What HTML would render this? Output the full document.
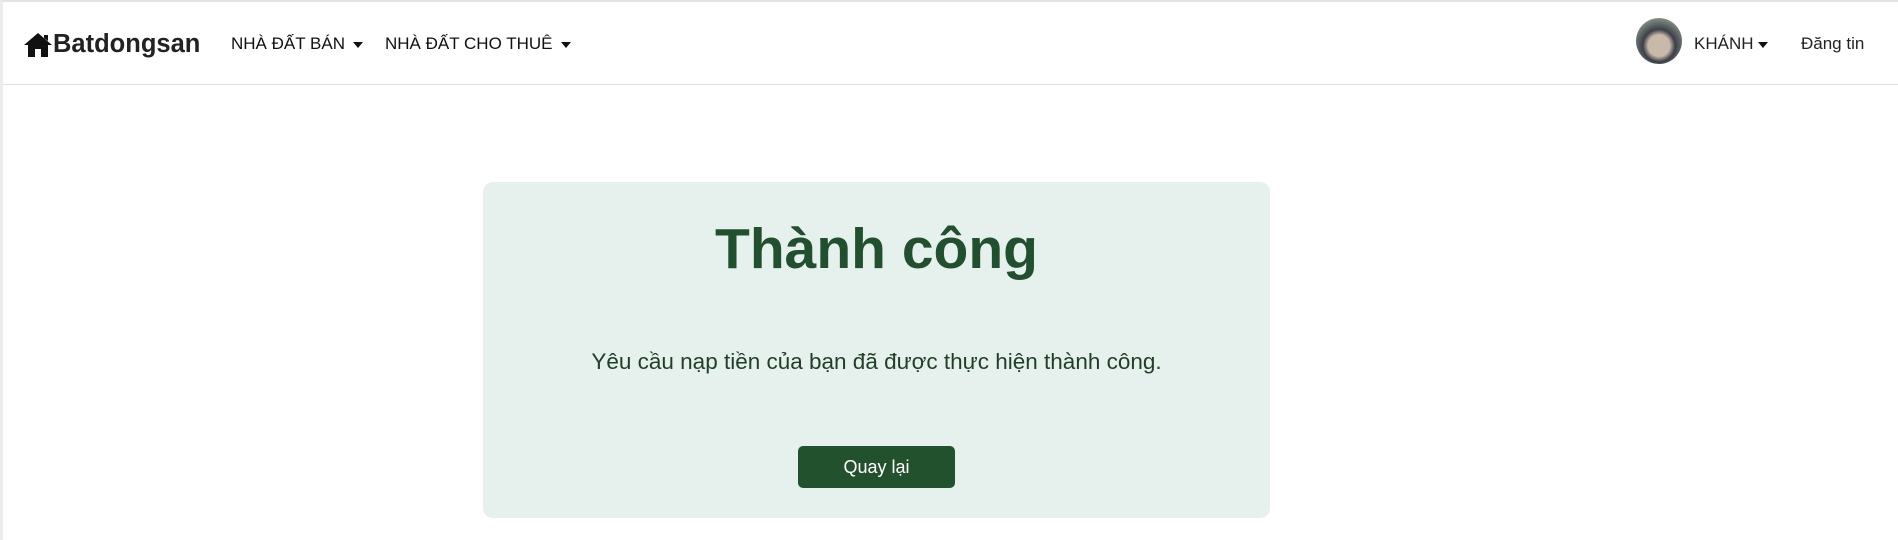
<!DOCTYPE html>
<html><head><meta charset="utf-8"><style>
*{box-sizing:border-box;margin:0;padding:0}
body{width:1898px;height:540px;background:#fff;font-family:"Liberation Sans",sans-serif;position:relative;overflow:hidden}
.frame{position:absolute;left:0;top:0;width:1898px;height:540px;border-top:2px solid #e4e4e4;border-left:3px solid #ececec}
.nav{position:absolute;left:3px;top:2px;right:0;height:83px;border-bottom:1px solid #dedede;background:#fff}
.t{position:absolute;white-space:nowrap}
.logo{left:20px;top:28px;font-size:25.5px;font-weight:bold;color:#222;display:flex;align-items:center}
.item{font-size:17px;color:#111;top:32px}
.caret{display:inline-block;width:0;height:0;border-left:5px solid transparent;border-right:5px solid transparent;border-top:6px solid #111;vertical-align:middle;margin-left:8px}
.card{position:absolute;left:483px;top:182px;width:787px;height:336px;background:#e6f0ec;border-radius:10px;text-align:center;color:#21502e}
h1{position:absolute;left:0;right:0;top:34px;font-size:57px;font-weight:bold}
.msg{position:absolute;left:0;right:0;top:167px;font-size:22.5px;color:#1f3f26}
.btn{position:absolute;left:315px;top:264px;width:157px;height:42px;background:#22522d;border-radius:5px;color:#fff;font-size:18px;line-height:42px}
</style></head><body>
<div class="frame"></div>
<div class="nav">
<div class="t logo"><svg width="30" height="26" viewBox="0 0 30 26"><path d="M15 1 L1 13 H5 V25 H12 V17 H18 V25 H25 V13 H29 Z M21 3 H25 V9 L21 6 Z" fill="#111"/></svg>Batdongsan</div>
<div class="t item" style="left:228px">NHÀ ĐẤT BÁN<span class="caret"></span></div>
<div class="t item" style="left:382px">NHÀ ĐẤT CHO THUÊ<span class="caret"></span></div>
<div class="t" style="left:1633px;top:16px;width:46px;height:46px;border-radius:50%;background:radial-gradient(circle at 50% 60%,#c9b9a8 0 30%,#3c3f4a 45%,#8a9a8a 80%)"></div>
<div class="t item" style="left:1691px;color:#222">KHÁNH<span class="caret" style="margin-left:4px"></span></div>
<div class="t item" style="left:1798px;color:#222">Đăng tin</div>
</div>
<div class="card">
<h1>Thành công</h1>
<div class="msg">Yêu cầu nạp tiền của bạn đã được thực hiện thành công.</div>
<div class="btn">Quay lại</div>
</div>
</body></html>
